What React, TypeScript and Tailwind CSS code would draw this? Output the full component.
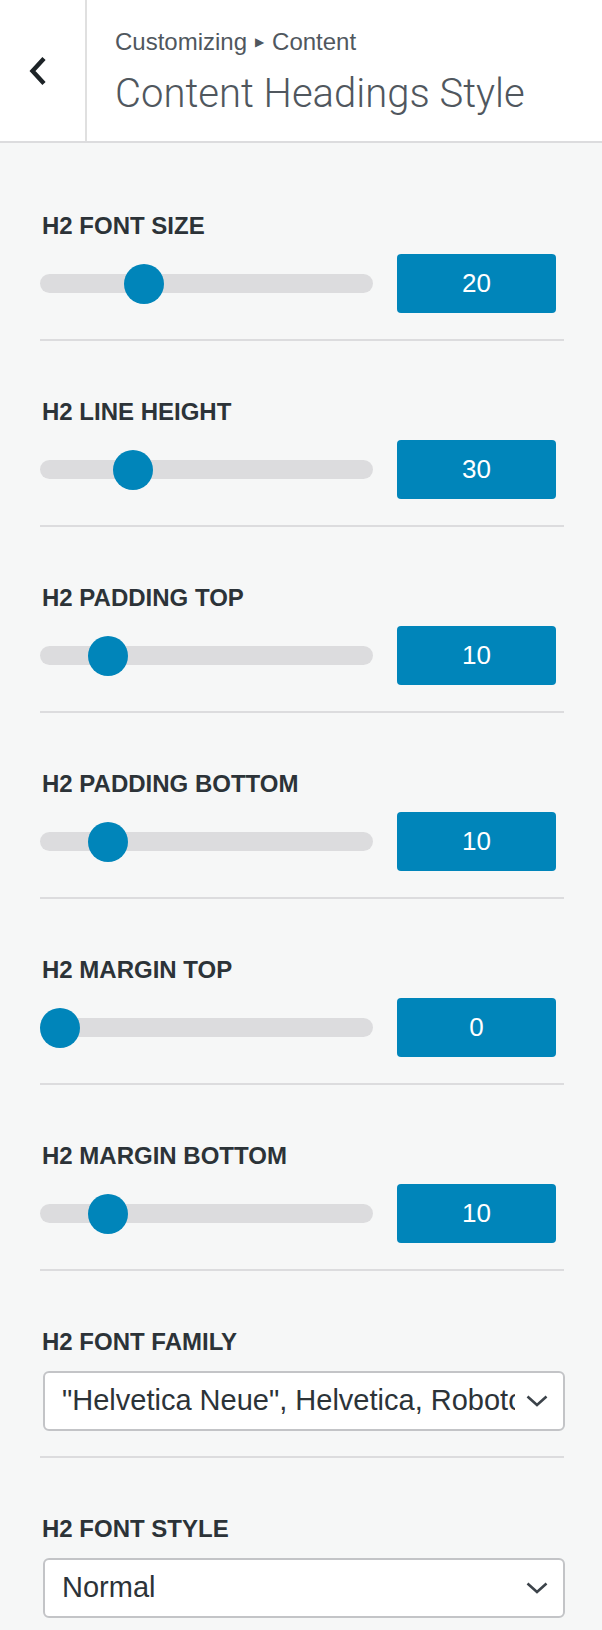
type SliderField = { label: string; value: number; pos: number };

const sliders: SliderField[] = [
  { label: 'H2 Font Size', value: 20, pos: 28.7 },
  { label: 'H2 Line Height', value: 30, pos: 24.9 },
  { label: 'H2 Padding Top', value: 10, pos: 16.4 },
  { label: 'H2 Padding Bottom', value: 10, pos: 16.4 },
  { label: 'H2 Margin Top', value: 0, pos: 0 },
  { label: 'H2 Margin Bottom', value: 10, pos: 16.4 },
];

const selects = [
  { label: 'H2 Font Family', value: '"Helvetica Neue", Helvetica, Roboto, Arial, sans-serif' },
  { label: 'H2 Font Style', value: 'Normal' },
];

function Label({ children }: { children: string }) {
  return (
    <div className="text-[24px] leading-[28px] font-bold uppercase text-[#2c3338] pl-[2px]">
      {children}
    </div>
  );
}

function SliderControl({ field }: { field: SliderField }) {
  return (
    <div className="flex flex-col">
      <Label>{field.label}</Label>
      <div className="mt-[14px] flex items-center gap-6 pr-2">
        {/* track */}
        <div className="relative flex-1 h-[19px] rounded-full bg-[#dcdcde]">
          <div
            className="absolute top-1/2 -translate-y-1/2 w-10 h-10 rounded-full bg-[#0085ba]"
            style={{ left: `calc(${field.pos}% * 0.88)` }}
          />
        </div>
        <div className="w-[159px] h-[59px] rounded-[4px] bg-[#0085ba] flex items-center justify-center text-white text-[26px]">
          {field.value}
        </div>
      </div>
    </div>
  );
}

function SelectControl({ label, value }: { label: string; value: string }) {
  return (
    <div className="flex flex-col">
      <Label>{label}</Label>
      <div className="mt-[15px] ml-[3px] w-[522px] h-[60px] bg-white border-2 border-[#c3c4c7] rounded-[6px] flex items-center pl-[17px] pr-[15px]">
        <span className="flex-1 overflow-hidden whitespace-nowrap text-[29px] text-[#2c3338]">
          {value}
        </span>
        <svg className="ml-[11px] shrink-0" width="22" height="12" viewBox="0 0 22 12" fill="none">
          <polyline points="1.5,1.5 11,10 20.5,1.5" stroke="#3c434a" strokeWidth="2.6" />
        </svg>
      </div>
    </div>
  );
}

export default function App() {
  return (
    <div
      className="w-[602px] min-h-[1630px] bg-[#f6f7f7]"
      style={{ fontFamily: '"Liberation Sans", Arial, sans-serif' }}
    >
      {/* Header */}
      <div className="flex h-[143px] bg-white border-b-2 border-[#dcdcde]">
        <div className="w-[87px] flex items-center pl-[29px] border-r-2 border-[#e0e0e0]">
          <svg width="18" height="30" viewBox="0 0 18 30" fill="none">
            <polyline points="15,2.5 3.5,15 15,27.5" stroke="#1d2327" strokeWidth="4.4" />
          </svg>
        </div>
        <div className="flex flex-col pl-[28px] pt-[26px]">
          <div className="text-[24px] leading-[32px] text-[#50575e] flex items-center gap-2">
            <span>Customizing</span>
            <span className="text-[12px]">▶</span>
            <span>Content</span>
          </div>
          <div
            className="text-[40px] leading-[48px] font-light text-[#50575e] mt-[12px]"
            style={{ fontFamily: 'Roboto, sans-serif' }}
          >
            Content Headings Style
          </div>
        </div>
      </div>

      {/* Controls */}
      <div className="pl-10 pr-[38px]">
        {sliders.map((s) => (
          <div key={s.label} className="pt-[57px] pb-[26px] border-b-2 border-[#dcdcde] first:pt-[69px]">
            <SliderControl field={s} />
          </div>
        ))}
        {selects.map((s, i) => (
          <div
            key={s.label}
            className={`pt-[57px] pb-[25px] ${i === 0 ? 'border-b-2 border-[#dcdcde]' : ''}`}
          >
            <SelectControl label={s.label} value={s.value} />
          </div>
        ))}
      </div>
    </div>
  );
}
